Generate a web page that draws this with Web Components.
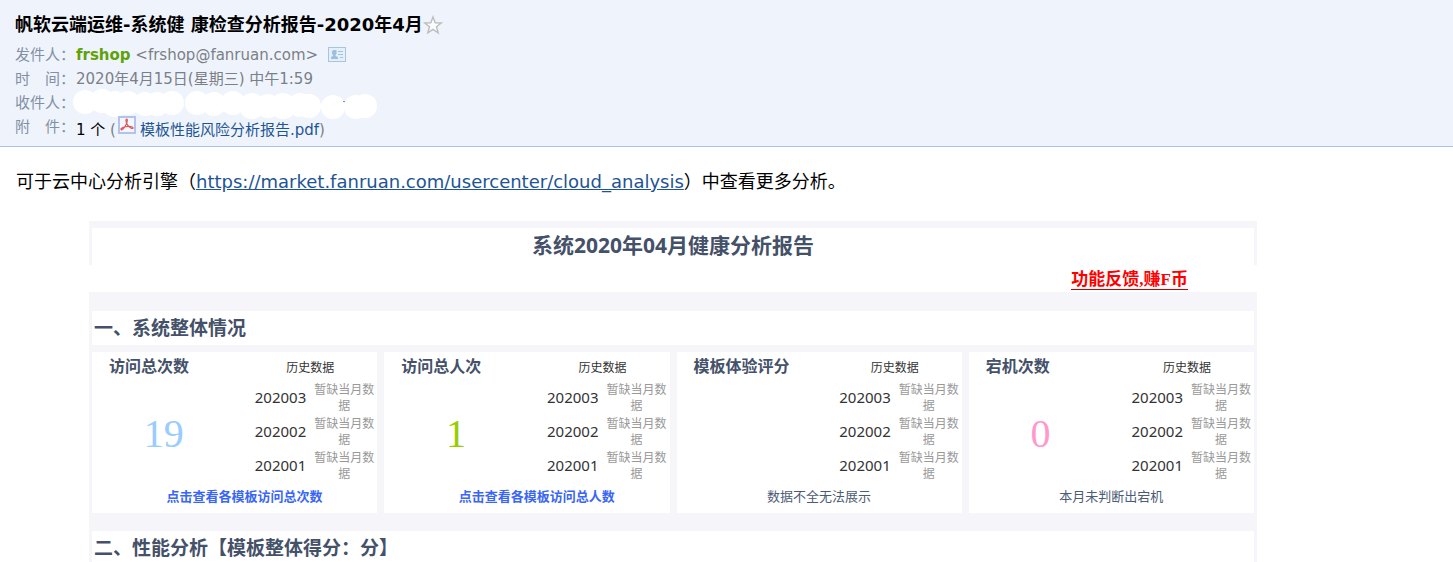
<!DOCTYPE html>
<html lang="zh-CN">
<head>
<meta charset="utf-8">
<title>帆软云端运维</title>
<style>
    body {
        margin: 0;
        background-color: #fff;
        color: #000;
        font-family: "DejaVu Sans", "Noto Sans CJK SC", sans-serif;
    }
</style>
</head>
<body>
<mail-page></mail-page>

<script>
class MailHeader extends HTMLElement {
    constructor() {
        super();

        this.shadow = this.attachShadow({ mode: 'open' });
    }

    connectedCallback() {
        const template = `
            <style>
                :host {
                    display: block;
                    padding: 12px 15px 7px 15px;
                    background-color: #eff4fc;
                    border-bottom: 1px solid #a6c3e3;
                }
                .subject {
                    display: flex;
                    align-items: center;
                    margin-bottom: 5px;
                }
                h1 {
                    margin: 0;
                    font-size: 18px;
                    line-height: 26px;
                }
                button {
                    display: flex;
                    padding: 0;
                    border: 0;
                    background: none;
                }
            </style>
            <div class="subject">
                <h1><slot name="subject"></slot></h1>
                <button type="button" aria-label="星标">
                    <svg width="20" height="20" viewBox="0 0 20 20">
                        <path d="M10 2 L12.2 7.8 L18.3 8 L13.5 11.7 L15.2 17.8 L10 14.3 L4.8 17.8 L6.5 11.7 L1.7 8 L7.8 7.8 Z" fill="#fbfcfe" stroke="#bdbdbd" stroke-width="1.4"/>
                    </svg>
                </button>
            </div>
            <slot></slot>
        `;

        this.shadow.innerHTML = template;
    }
}

class MailField extends HTMLElement {
    constructor() {
        super();

        this.shadow = this.attachShadow({ mode: 'open' });
    }

    connectedCallback() {
        const template = `
            <style>
                :host {
                    display: flex;
                    height: 24px;
                    font-size: 15px;
                    line-height: 24px;
                    color: #7b7f86;
                    white-space: pre;
                }
                .label {
                    flex: 0 0 61px;
                    color: #8290a4;
                }
                .value {
                    display: flex;
                    align-items: center;
                }
            </style>
            <span class="label">${this.getAttribute('label')}</span>
            <span class="value"><slot></slot></span>
        `;

        this.shadow.innerHTML = template;
    }
}

class StatCard extends HTMLElement {
    constructor() {
        super();

        this.shadow = this.attachShadow({ mode: 'open' });
    }

    connectedCallback() {
        const months = ['202003', '202002', '202001'];
        const rows = months.map(m => `<tr><th scope="row">${m}</th><td>暂缺当月数据</td></tr>`).join('');

        const template = `
            <style>
                :host {
                    display: grid;
                    grid-template-columns: 1fr 134px;
                    padding-bottom: 5px;
                    background-color: #fff;
                }
                .main {
                    display: flex;
                    flex-direction: column;
                    min-height: 132px;
                }
                h3 {
                    margin: 0;
                    padding: 0 0 2px 17px;
                    font-size: 16px;
                    line-height: 28px;
                    color: #445168;
                    white-space: nowrap;
                }
                .number {
                    flex: 1;
                    display: flex;
                    align-items: center;
                    justify-content: center;
                    padding: 2px 8px 0 0;
                    font-family: "Liberation Serif", serif;
                    font-size: 40px;
                    line-height: 40px;
                }
                table {
                    align-self: start;
                    width: 100%;
                    border-collapse: collapse;
                    table-layout: fixed;
                }
                th, td {
                    padding: 0;
                    font-weight: normal;
                }
                thead th {
                    height: 29px;
                    font-size: 12px;
                    color: #333;
                }
                tbody th {
                    height: 32px;
                    padding: 0 5px 2px 0;
                    text-align: right;
                    font-size: 15px;
                    line-height: 24px;
                    color: #333;
                }
                tbody td {
                    padding: 0 3px;
                    text-align: center;
                    font-size: 12px;
                    line-height: 16px;
                    color: #999;
                }
                .foot {
                    grid-column: 1 / 3;
                    text-align: center;
                    font-size: 13px;
                    line-height: 24px;
                    color: #4d5b75;
                }
            </style>
            <div class="main">
                <h3>${this.getAttribute('name')}</h3>
                <div class="number" style="color: ${this.getAttribute('color')}">${this.getAttribute('value')}</div>
            </div>
            <table>
                <colgroup><col style="width: 68px"><col></colgroup>
                <thead><tr><th colspan="2">历史数据</th></tr></thead>
                <tbody>${rows}</tbody>
            </table>
            <div class="foot"><slot></slot></div>
        `;

        this.shadow.innerHTML = template;
    }
}

class HealthReport extends HTMLElement {
    constructor() {
        super();

        this.shadow = this.attachShadow({ mode: 'open' });
    }

    connectedCallback() {
        const template = `
            <style>
                :host {
                    display: block;
                    padding-top: 7px;
                    background-color: #f5f5fa;
                    font-family: "Noto Sans", "Noto Sans CJK SC", sans-serif;
                    color: #445168;
                }
                h1, h2 {
                    margin: 0 3px;
                    background-color: #fff;
                }
                h1 {
                    padding-bottom: 3px;
                    text-align: center;
                    font-size: 21px;
                    line-height: 34px;
                }
                h2 {
                    padding-left: 2px;
                    font-size: 19px;
                    line-height: 34px;
                }
                .feedback {
                    display: flex;
                    justify-content: flex-end;
                    align-items: flex-end;
                    height: 25px;
                    margin-bottom: 19px;
                    padding: 0 69px 2px 0;
                    background-color: #fff;
                }
                .feedback a {
                    border-bottom: 1px solid #c00;
                    color: #f00;
                    font-family: "Liberation Serif", "Noto Sans CJK SC", serif;
                    font-size: 17px;
                    font-weight: bold;
                    line-height: 18px;
                    text-decoration: none;
                }
                .cards {
                    display: grid;
                    grid-template-columns: repeat(4, 1fr);
                    gap: 7px;
                    margin: 7px 3px 18px 3px;
                }
                .cards a {
                    padding-left: 20px;
                    color: #3a66f5;
                    font-weight: bold;
                    text-decoration: none;
                }
            </style>
            <h1>系统2020年04月健康分析报告</h1>
            <div class="feedback"><a href="#feedback">功能反馈,赚F币</a></div>
            <h2>一、系统整体情况</h2>
            <div class="cards">
                <stat-card name="访问总次数" value="19" color="#99ccff"><a href="#visits">点击查看各模板访问总次数</a></stat-card>
                <stat-card name="访问总人次" value="1" color="#99cc00"><a href="#visitors">点击查看各模板访问总人数</a></stat-card>
                <stat-card name="模板体验评分" value="" color="#ffcc00">数据不全无法展示</stat-card>
                <stat-card name="宕机次数" value="0" color="#ff99cc">本月未判断出宕机</stat-card>
            </div>
            <h2>二、性能分析【模板整体得分：分】</h2>
        `;

        this.shadow.innerHTML = template;
    }
}

class MailPage extends HTMLElement {
    constructor() {
        super();

        this.shadow = this.attachShadow({ mode: 'open' });
    }

    connectedCallback() {
        const template = `
            <style>
                :host {
                    display: block;
                    height: 100vh;
                    overflow: hidden;
                }
                a {
                    color: #1e5494;
                }
                button {
                    display: flex;
                    margin-left: 10px;
                    padding: 0;
                    border: 0;
                    background: none;
                }
                svg {
                    flex: none;
                    overflow: visible;
                }
                .sender {
                    color: #5fa207;
                }
                .count {
                    color: #000;
                }
                .file {
                    text-decoration: none;
                    margin-left: 4px;
                }
                .attach {
                    padding-top: 5px;
                }
                .pdf {
                    margin: 0 0 4px 2px;
                }
                p {
                    margin: 21px 16px 25px 16px;
                    font-size: 18px;
                    line-height: 28px;
                }
                health-report {
                    margin: 0 196px 0 89px;
                }
            </style>
            <mail-header>
                <span slot="subject">帆软云端运维-系统健 康检查分析报告-2020年4月</span>
                <mail-field label="发件人："><b class="sender">frshop</b> &lt;frshop@fanruan.com&gt;<button type="button" aria-label="联系人">
                    <svg width="18" height="16" viewBox="0 0 18 16">
                        <rect x="0.5" y="0.5" width="17" height="14" fill="#e4effa" stroke="#a9c5dc"/>
                        <path d="M5.5 3 h3 v4 l-1 1 v1 l2.500 1 v2 h-7 v-2 l2 -1 v-1 l-1 -1 v-3 Z" fill="#9cbfdf"/>
                        <path d="M10 4.5 h5 M10 7.5 h5 M12 10.5 h3" stroke="#a3c3e0"/>
                    </svg>
                </button></mail-field>
                <mail-field label="时　间：">2020年4月15日(星期三) 中午1:59</mail-field>
                <mail-field label="收件人："><svg width="304" height="24" viewBox="76 90 304 24" fill="#fff" aria-hidden="true">
                    <circle cx="85" cy="101" r="12"/><circle cx="102" cy="100" r="12"/><circle cx="115" cy="103" r="13"/>
                    <circle cx="128" cy="102" r="12"/><circle cx="145" cy="103" r="12"/><circle cx="157" cy="103" r="12"/>
                    <circle cx="172" cy="102" r="12"/><circle cx="197" cy="102" r="12"/><circle cx="214" cy="103" r="12"/>
                    <circle cx="233" cy="102" r="12"/><circle cx="252" cy="105" r="13"/><circle cx="268" cy="105" r="12"/>
                    <circle cx="283" cy="105" r="13"/><circle cx="300" cy="104" r="12"/><circle cx="309" cy="105" r="12"/>
                    <circle cx="333" cy="106" r="12"/><circle cx="356" cy="106" r="12"/><circle cx="365" cy="105" r="12"/>
                    <path d="M343 100.500 h2" stroke="#8a8f98"/>
                </svg></mail-field>
                <mail-field label="附　件："><span class="attach"><span class="count">1 个</span> (</span><svg class="pdf" width="18" height="18" viewBox="0 0 18 18">
                    <rect x="1" y="1" width="16" height="16" fill="#f4f6fd" stroke="#b4c3ec" stroke-width="2"/>
                    <path d="M8.500 3 C10.500 3 8.500 8 7 10.500 C5.500 13 3.500 14.500 3 13.500 C2.500 12 7 10.500 10 10.300 C13 10 15.500 11 15 12.200 C14 13.500 9.500 10 8.500 7 C7.800 5 7.800 3 8.500 3 Z" fill="none" stroke="#dc5a5a" stroke-width="1.200"/>
                </svg><span class="attach"><a class="file" href="#attachment">模板性能风险分析报告.pdf</a>)</span></mail-field>
            </mail-header>
            <p>可于云中心分析引擎（<a href="https://market.fanruan.com/usercenter/cloud_analysis">https://market.fanruan.com/usercenter/cloud_analysis</a>）中查看更多分析。</p>
            <health-report></health-report>
        `;

        this.shadow.innerHTML = template;
    }
}

window.customElements.define('mail-header', MailHeader);
window.customElements.define('mail-field', MailField);
window.customElements.define('stat-card', StatCard);
window.customElements.define('health-report', HealthReport);
window.customElements.define('mail-page', MailPage);
</script>
</body>
</html>
